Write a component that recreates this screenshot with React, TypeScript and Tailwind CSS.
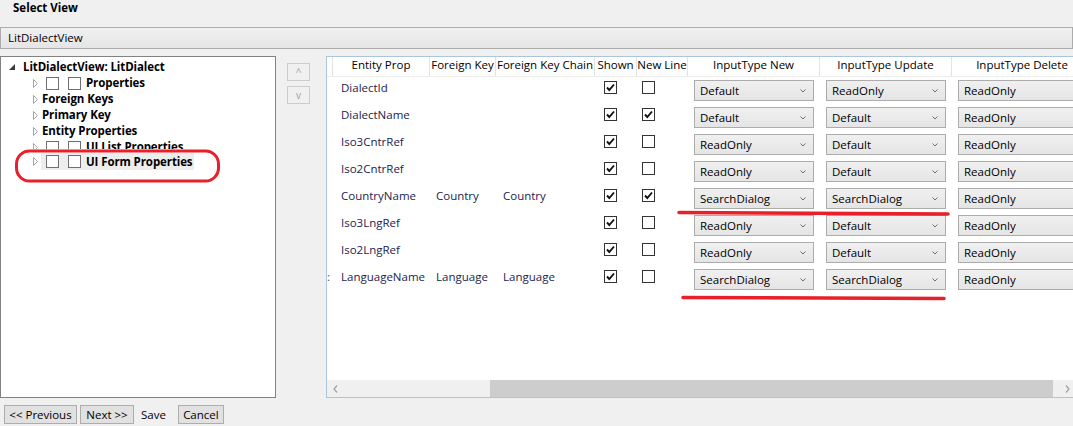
import React from "react";

type Row = {
  p: string;
  fk?: string;
  ch?: string;
  s: boolean;
  n: boolean;
  a: string;
  b: string;
  c: string;
};

const rows: Row[] = [
  { p: "DialectId", s: true, n: false, a: "Default", b: "ReadOnly", c: "ReadOnly" },
  { p: "DialectName", s: true, n: true, a: "Default", b: "Default", c: "ReadOnly" },
  { p: "Iso3CntrRef", s: true, n: false, a: "ReadOnly", b: "Default", c: "ReadOnly" },
  { p: "Iso2CntrRef", s: true, n: false, a: "ReadOnly", b: "Default", c: "ReadOnly" },
  { p: "CountryName", fk: "Country", ch: "Country", s: true, n: true, a: "SearchDialog", b: "SearchDialog", c: "ReadOnly" },
  { p: "Iso3LngRef", s: true, n: false, a: "ReadOnly", b: "Default", c: "ReadOnly" },
  { p: "Iso2LngRef", s: true, n: false, a: "ReadOnly", b: "Default", c: "ReadOnly" },
  { p: "LanguageName", fk: "Language", ch: "Language", s: true, n: false, a: "SearchDialog", b: "SearchDialog", c: "ReadOnly" },
];

function Check({ on }: { on: boolean }) {
  return (
    <div className="w-[13px] h-[13px] border border-[#333333] bg-white flex items-center justify-center">
      {on && (
        <svg width="11" height="11" viewBox="0 0 11 11">
          <path d="M2 5.5 L4.3 8 L9 2.5" fill="none" stroke="#111" strokeWidth="1.9" />
        </svg>
      )}
    </div>
  );
}

function TreeBox() {
  return <div className="w-[13px] h-[13px] shrink-0 border border-[#707070] bg-white" />;
}

function Collapsed() {
  return (
    <svg width="5" height="9" viewBox="0 0 5 9" className="shrink-0">
      <path d="M0.5 0.5 L4.5 4.5 L0.5 8.5 Z" fill="white" stroke="#a6a6a6" strokeWidth="1" />
    </svg>
  );
}

function Combo({ v, w }: { v: string; w: string }) {
  return (
    <div
      className={`${w} h-[21px] border border-[#acacac] bg-gradient-to-b from-[#f0f0f0] to-[#e5e5e5] flex items-center justify-between pl-[5px] pr-[7px] text-black shrink-0`}
    >
      <span>{v}</span>
      <svg width="6" height="4" viewBox="0 0 6 4">
        <path d="M0.5 0.5 L3 3 L5.5 0.5" fill="none" stroke="#707070" strokeWidth="1" />
      </svg>
    </div>
  );
}

export default function App() {
  return (
    <div className="relative w-[1073px] h-[426px] overflow-hidden bg-[#f0f0f0] font-['Open_Sans',sans-serif] text-[11.5px] leading-[16px] text-black">
      {/* title */}
      <div className="h-[27px] pl-[13px] font-bold">Select View</div>
      {/* view combo */}
      <div className="h-[22px] border border-[#acacac] bg-gradient-to-b from-[#f0f0f0] to-[#e5e5e5] flex items-center pl-[7px]">
        LitDialectView
      </div>
      <div className="h-[7px]" />
      {/* main */}
      <div className="flex h-[342px]">
        {/* tree */}
        <div className="w-[276px] shrink-0 border border-[#828282] bg-white pt-[2px] font-bold tracking-[-0.1px]">
          <div className="flex items-center h-[16px] pl-[8px]">
            <svg width="6" height="6" viewBox="0 0 6 6" className="shrink-0">
              <path d="M6 0 L6 6 L0 6 Z" fill="#3c3c3c" />
            </svg>
            <span className="ml-[8px] whitespace-nowrap">LitDialectView: LitDialect</span>
          </div>
          <div className="flex items-center h-[16px] pl-[32px]">
            <Collapsed />
            <div className="ml-[8px]"><TreeBox /></div>
            <div className="ml-[9px]"><TreeBox /></div>
            <span className="ml-[5px] whitespace-nowrap">Properties</span>
          </div>
          <div className="flex items-center h-[16px] pl-[32px]">
            <Collapsed />
            <span className="ml-[4px] whitespace-nowrap">Foreign Keys</span>
          </div>
          <div className="flex items-center h-[16px] pl-[32px]">
            <Collapsed />
            <span className="ml-[4px] whitespace-nowrap">Primary Key</span>
          </div>
          <div className="flex items-center h-[16px] pl-[32px]">
            <Collapsed />
            <span className="ml-[4px] whitespace-nowrap">Entity Properties</span>
          </div>
          <div className="h-[10px] overflow-hidden">
            <div className="flex items-center h-[16px] pl-[32px]">
              <Collapsed />
              <div className="ml-[8px]"><TreeBox /></div>
              <div className="ml-[9px]"><TreeBox /></div>
              <span className="ml-[5px] whitespace-nowrap">UI List Properties</span>
            </div>
          </div>
          <div className="h-[22px] bg-white pt-[4px] pl-[32px] flex items-start">
            <div className="h-[17px] flex items-center">
              <Collapsed />
            </div>
            <div className="ml-[3px] h-[17px] bg-[#ededed] flex items-center pl-[5px] pr-[1px]">
              <TreeBox />
              <div className="ml-[9px]"><TreeBox /></div>
              <span className="ml-[5px] whitespace-nowrap">UI Form Properties</span>
            </div>
          </div>
        </div>
        {/* up/down */}
        <div className="w-[50px] shrink-0 pl-[11px] pt-[7px] flex flex-col gap-[5px]">
          <div className="w-[23px] h-[18px] border border-[#cccccc] bg-[#f0f0f0] flex items-center justify-center text-[#a0a0a0] text-[10px]">
            ^
          </div>
          <div className="w-[23px] h-[18px] border border-[#cccccc] bg-[#f0f0f0] flex items-center justify-center text-[#a0a0a0] text-[10px]">
            v
          </div>
        </div>
        {/* grid */}
        <div className="flex-1 border border-r-0 border-[#a9c6de] bg-white flex flex-col overflow-hidden">
          <div className="flex h-[20px] shrink-0 border-b border-[#ececec]">
            <div className="w-[6px] shrink-0 border-r border-[#e3e3e3]" />
            <div className="w-[97px] shrink-0 border-r border-[#e3e3e3] text-center">Entity Prop</div>
            <div className="w-[66px] shrink-0 border-r border-[#e3e3e3] text-center whitespace-nowrap">Foreign Key</div>
            <div className="w-[99px] shrink-0 border-r border-[#e3e3e3] text-center whitespace-nowrap">Foreign Key Chain</div>
            <div className="w-[42px] shrink-0 border-r border-[#e3e3e3] text-center">Shown</div>
            <div className="w-[51px] shrink-0 border-r border-[#e3e3e3] text-center whitespace-nowrap">New Line</div>
            <div className="w-[132px] shrink-0 border-r border-[#e3e3e3] text-center">InputType New</div>
            <div className="w-[132px] shrink-0 border-r border-[#e3e3e3] text-center">InputType Update</div>
            <div className="w-[140px] shrink-0 text-center">InputType Delete</div>
          </div>
          {rows.map((r, i) => (
            <div key={r.p} className="flex h-[27px] shrink-0 text-[#1b2350]">
              <div className="w-[6px] shrink-0 pt-[3px] overflow-hidden text-[#555]">{i === 7 ? ":" : ""}</div>
              <div className="w-[97px] shrink-0 pt-[3px] pl-[8px] whitespace-nowrap">{r.p}</div>
              <div className="w-[66px] shrink-0 pt-[3px] pl-[6px]">{r.fk ?? ""}</div>
              <div className="w-[99px] shrink-0 pt-[3px] pl-[7px]">{r.ch ?? ""}</div>
              <div className="w-[42px] shrink-0 pt-[4px] pl-[9px]"><Check on={r.s} /></div>
              <div className="w-[51px] shrink-0 pt-[4px] pl-[5px]"><Check on={r.n} /></div>
              <div className="w-[132px] shrink-0 pt-[3px] pl-[6px]"><Combo v={r.a} w="w-[120px]" /></div>
              <div className="w-[132px] shrink-0 pt-[3px] pl-[6px]"><Combo v={r.b} w="w-[120px]" /></div>
              <div className="w-[140px] shrink-0 pt-[3px] pl-[6px]"><Combo v={r.c} w="w-[130px]" /></div>
            </div>
          ))}
          <div className="flex-1" />
          <div className="h-[17px] shrink-0 bg-[#f0f0f0] flex">
            <div className="w-[17px] flex items-center justify-center">
              <svg width="5" height="8" viewBox="0 0 5 8">
                <path d="M4 0.5 L1 4 L4 7.5" fill="none" stroke="#a0a0a0" strokeWidth="1.2" />
              </svg>
            </div>
            <div className="w-[146px]" />
            <div className="w-[563px] bg-[#cdcdcd]" />
            <div className="flex-1 flex items-center justify-end pr-[3px]">
              <svg width="5" height="8" viewBox="0 0 5 8">
                <path d="M1 0.5 L4 4 L1 7.5" fill="none" stroke="#a0a0a0" strokeWidth="1.2" />
              </svg>
            </div>
          </div>
        </div>
      </div>
      {/* bottom buttons */}
      <div className="flex items-center pl-[4px] pt-[7px]">
        <div className="w-[73px] h-[19px] border border-[#adadad] bg-[#e1e1e1] flex items-center justify-center whitespace-nowrap">&lt;&lt; Previous</div>
        <div className="ml-[3px] w-[54px] h-[19px] border border-[#adadad] bg-[#e1e1e1] flex items-center justify-center whitespace-nowrap">Next &gt;&gt;</div>
        <div className="ml-[7px] h-[19px] flex items-center">Save</div>
        <div className="ml-[12px] w-[46px] h-[19px] border border-[#adadad] bg-[#e1e1e1] flex items-center justify-center">Cancel</div>
      </div>
      {/* red annotations */}
      <svg className="absolute left-0 top-0 pointer-events-none" width="1073" height="426">
        <rect x="16.5" y="151" width="202" height="30" rx="13" fill="none" stroke="#e8202a" strokeWidth="3" />
        <path d="M679 212.5 L948 214" stroke="#e8202a" strokeWidth="3.5" strokeLinecap="round" />
        <path d="M683 297.5 L944 298.5" stroke="#e8202a" strokeWidth="3.5" strokeLinecap="round" />
      </svg>
    </div>
  );
}
